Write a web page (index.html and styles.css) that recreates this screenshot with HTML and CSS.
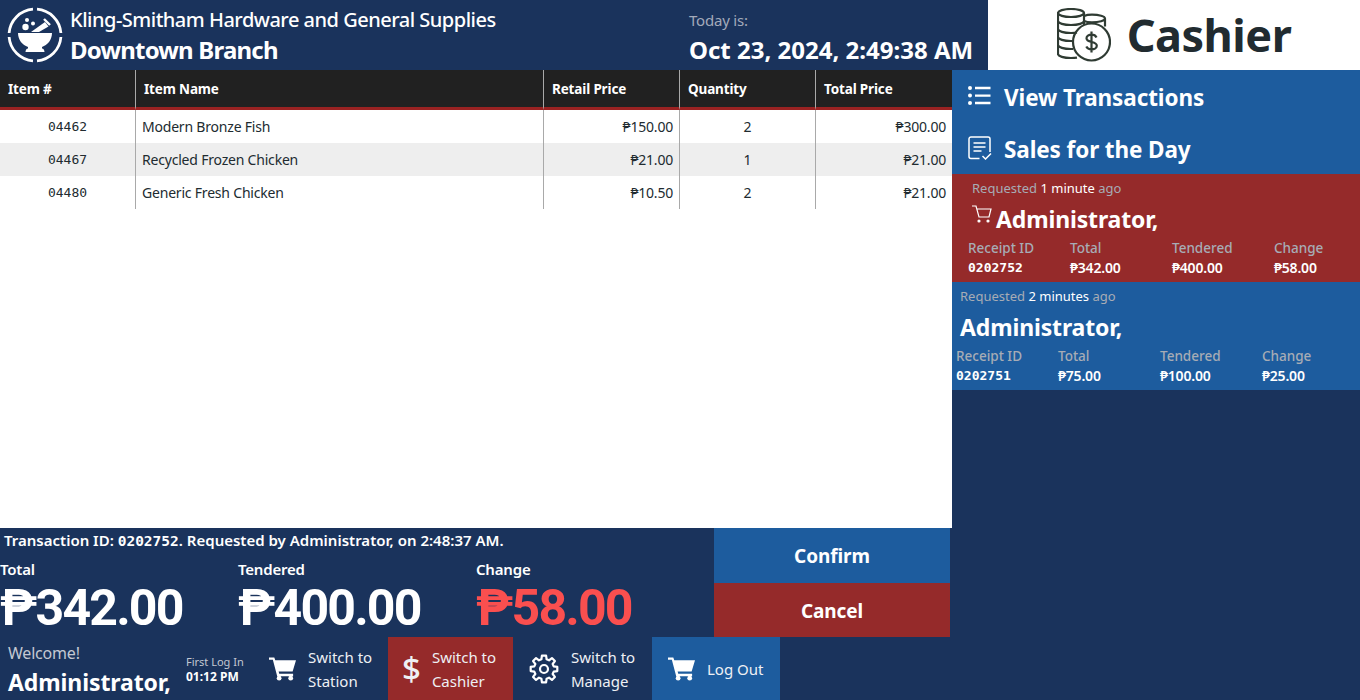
FILE: index.html
```html
<!DOCTYPE html>
<html lang="en">
<head>
    <meta charset="UTF-8">
    <title>Cashier</title>
    <link rel="stylesheet" href="styles.css">
</head>
<body>
    <header class="top">
        <div class="brand">
            <svg class="logo" viewBox="0 0 56 56" fill="none">
                <path d="M30 2.100A26 26 0 0 1 53.900 26M53.900 30A26 26 0 0 1 30 53.900M26 53.900A26 26 0 0 1 2.100 30M2.100 26A26 26 0 0 1 26 2.100" stroke="#fff" stroke-width="2.800"/>
                <path d="M11 26h34c0 7-4.500 12-10 14v1.500c1.500.2 2.500 1.500 2.500 3.500h-19c0-2 1-3.300 2.500-3.500V40c-5.500-2-10-7-10-14z" fill="#fff"/>
                <path d="M24 25l14-10 3.500 4.500L32 25z" fill="#fff"/>
                <path d="M37 12l6 6" stroke="#fff" stroke-width="2.400"/>
                <circle cx="18.500" cy="20" r="3.200" fill="#fff"/>
                <circle cx="20" cy="13" r="2" fill="#fff"/>
                <circle cx="26" cy="16.500" r="2" fill="#fff"/>
            </svg>
            <div>
                <div class="brand-name">Kling-Smitham Hardware and General Supplies</div>
                <div class="brand-branch">Downtown Branch</div>
            </div>
        </div>
        <div class="today">
            <div class="today-label">Today is:</div>
            <div class="today-value">Oct 23, 2024, 2:49:38 AM</div>
        </div>
        <div class="module">
            <svg class="module-icon" viewBox="0 0 54 54" fill="none" stroke="#2f3b33" stroke-width="2.200">
                <ellipse cx="14" cy="5" rx="13" ry="4"/>
                <path d="M1 5v41c0 2.200 5.800 4 13 4 2 0 4-.1 6-.4M27 5v12"/>
                <path d="M1 13c0 2.200 5.800 4 13 4s13-1.800 13-4M1 21c0 2.200 5.800 4 13 4 2.500 0 4-.1 6-.5M1 29c0 2.200 5.800 4 13 4h2M1 37c0 2.200 5.800 4 13 4h2"/>
                <path d="M27 8c2-.8 4-1.300 8-1.300 7 0 13 1.600 13 3.800s-6 3.800-13 3.800c-3 0-6-.4-8-1.300M48 10.500v8"/>
                <circle cx="34.500" cy="34" r="18.500"/>
                <path d="M39.500 29.500c-.8-1.800-2.800-2.800-5-2.800-2.800 0-5 1.500-5 3.600 0 5 10.300 2.500 10.300 7.400 0 2.100-2.300 3.600-5.300 3.600-2.300 0-4.300-1-5.200-2.800M34.500 23.500v21"/>
            </svg>
            <span class="module-title">Cashier</span>
        </div>
    </header>

    <div class="content">
        <main class="main">
            <div class="table-area">
                <table class="items">
                    <thead>
                        <tr>
                            <th class="col-id">Item #</th>
                            <th class="col-name">Item Name</th>
                            <th class="col-price">Retail Price</th>
                            <th class="col-qty">Quantity</th>
                            <th class="col-total">Total Price</th>
                        </tr>
                    </thead>
                    <tbody>
                        <tr>
                            <td class="mono">04462</td>
                            <td>Modern Bronze Fish</td>
                            <td class="num">₱150.00</td>
                            <td class="qty">2</td>
                            <td class="num">₱300.00</td>
                        </tr>
                        <tr>
                            <td class="mono">04467</td>
                            <td>Recycled Frozen Chicken</td>
                            <td class="num">₱21.00</td>
                            <td class="qty">1</td>
                            <td class="num">₱21.00</td>
                        </tr>
                        <tr>
                            <td class="mono">04480</td>
                            <td>Generic Fresh Chicken</td>
                            <td class="num">₱10.50</td>
                            <td class="qty">2</td>
                            <td class="num">₱21.00</td>
                        </tr>
                    </tbody>
                </table>
            </div>

            <section class="summary">
                <div class="summary-info">
                    <p class="trans-line">Transaction ID: <span class="trans-id">0202752</span>. Requested by Administrator, on 2:48:37 AM.</p>
                    <div class="amounts">
                        <div class="amount">
                            <div class="amount-label">Total</div>
                            <div class="amount-value">₱342.00</div>
                        </div>
                        <div class="amount">
                            <div class="amount-label">Tendered</div>
                            <div class="amount-value">₱400.00</div>
                        </div>
                        <div class="amount">
                            <div class="amount-label">Change</div>
                            <div class="amount-value change">₱58.00</div>
                        </div>
                    </div>
                </div>
                <div class="actions">
                    <button class="action confirm">Confirm</button>
                    <button class="action cancel">Cancel</button>
                </div>
            </section>

            <nav class="bottom">
                <div class="welcome">
                    <div class="welcome-label">Welcome!</div>
                    <div class="welcome-name">Administrator,</div>
                </div>
                <div class="login">
                    <div class="login-label">First Log In</div>
                    <div class="login-time">01:12 PM</div>
                </div>
                <a class="nav-btn station">
                    <svg class="nav-icon" viewBox="0 0 28 24" fill="#fff"><path d="M0 0h5.500l1 3H28l-3.500 11.500H10l.6 2.500H25v2.500H8.500L4 2.500H0z"/><circle cx="10.500" cy="21.500" r="2.500"/><circle cx="22.500" cy="21.500" r="2.500"/></svg>
                    <span class="nav-text">Switch to<br>Station</span>
                </a>
                <a class="nav-btn cashier">
                    <span class="dollar">$</span>
                    <span class="nav-text">Switch to<br>Cashier</span>
                </a>
                <a class="nav-btn manage">
                    <svg class="gear" viewBox="0 0 30 30" fill="none" stroke="#fff" stroke-width="2.200" stroke-linejoin="round"><circle cx="15" cy="15" r="4"/><path d="M12.400 5.300L12.900 1.700H17.100L17.600 5.300L20 6.340L22.940 4.080L25.920 7.060L23.660 10L24.700 12.400L28.300 12.900V17.100L24.700 17.600L23.660 20L25.920 22.940L22.940 25.920L20 23.660L17.600 24.700L17.100 28.300H12.900L12.400 24.700L10 23.660L7.060 25.920L4.080 22.940L6.340 20L5.300 17.600L1.700 17.100V12.900L5.300 12.400L6.340 10L4.080 7.060L7.060 4.080L10 6.340Z"/></svg>
                    <span class="nav-text">Switch to<br>Manage</span>
                </a>
                <a class="nav-btn logout">
                    <svg class="nav-icon" viewBox="0 0 28 24" fill="#fff"><path d="M0 0h5.500l1 3H28l-3.500 11.500H10l.6 2.500H25v2.500H8.500L4 2.500H0z"/><circle cx="10.500" cy="21.500" r="2.500"/><circle cx="22.500" cy="21.500" r="2.500"/></svg>
                    <span class="nav-text">Log Out</span>
                </a>
            </nav>
        </main>

        <aside class="side">
            <a class="side-link">
                <svg class="side-icon" viewBox="0 0 24 24" fill="none" stroke="#fff" stroke-width="2.400"><path d="M7.500 4H23M7.500 11.600H23M7.500 19H23"/><circle cx="2.500" cy="4" r="2" fill="#fff" stroke="none"/><circle cx="2.500" cy="11.600" r="2" fill="#fff" stroke="none"/><circle cx="2.500" cy="19" r="2" fill="#fff" stroke="none"/></svg>
                View Transactions
            </a>
            <a class="side-link">
                <svg class="side-icon" viewBox="0 0 24 24" fill="none" stroke="#fff" stroke-width="1.500"><path d="M12 22.500H3.500a2 2 0 0 1-2-2V3a2 2 0 0 1 2-2h17a2 2 0 0 1 2 2v13"/><path d="M6 7h12M6 11h12M6 15h8M15 20l3 3 5.500-5.500"/></svg>
                Sales for the Day
            </a>
            <article class="ticket active">
                <div class="ticket-when">Requested <span>1 minute</span> ago</div>
                <div class="ticket-who">
                    <svg class="ticket-cart" viewBox="0 0 20 20" fill="none" stroke="#fff" stroke-width="1.200"><path d="M0 1h4l3 11h10l2-8H5"/><circle cx="7" cy="16" r="1" fill="#fff"/><circle cx="16" cy="16" r="1" fill="#fff"/></svg>
                    Administrator,
                </div>
                <div class="ticket-grid">
                    <div class="ticket-head">Receipt ID</div>
                    <div class="ticket-head">Total</div>
                    <div class="ticket-head">Tendered</div>
                    <div class="ticket-head">Change</div>
                    <div class="ticket-id">0202752</div>
                    <div class="ticket-val">₱342.00</div>
                    <div class="ticket-val">₱400.00</div>
                    <div class="ticket-val">₱58.00</div>
                </div>
            </article>
            <article class="ticket">
                <div class="ticket-when">Requested <span>2 minutes</span> ago</div>
                <div class="ticket-who">Administrator,</div>
                <div class="ticket-grid">
                    <div class="ticket-head">Receipt ID</div>
                    <div class="ticket-head">Total</div>
                    <div class="ticket-head">Tendered</div>
                    <div class="ticket-head">Change</div>
                    <div class="ticket-id">0202751</div>
                    <div class="ticket-val">₱75.00</div>
                    <div class="ticket-val">₱100.00</div>
                    <div class="ticket-val">₱25.00</div>
                </div>
            </article>
        </aside>
    </div>
</body>
</html>
```

FILE: styles.css
```css
* {
    box-sizing: border-box;
}

body {
    margin: 0;
    height: 700px;
    overflow: hidden;
    font-family: "Noto Sans", "Open Sans", sans-serif;
    background-color: #1a335c;
    color: #fff;
}

.top {
    display: flex;
    height: 70px;
    background-color: #1a335c;
}

.brand {
    display: flex;
    align-items: center;
    width: 689px;
    padding-left: 7px;
}

.logo {
    width: 56px;
    height: 56px;
    margin-right: 7px;
}

.brand-name {
    font-size: 20px;
    font-weight: 500;
    line-height: 27px;
    letter-spacing: -0.5px;
    margin-top: 1px;
    white-space: nowrap;
}

.brand-branch {
    font-size: 24px;
    font-weight: 700;
    line-height: 31px;
    letter-spacing: -0.8px;
    margin-top: 1px;
}

.today {
    width: 299px;
    padding-top: 10px;
}

.today-label {
    font-size: 15px;
    line-height: 20px;
    color: #a3aaba;
    letter-spacing: -0.2px;
}

.today-value {
    font-size: 24px;
    font-weight: 700;
    line-height: 40px;
    white-space: nowrap;
}

.module {
    flex: 1;
    display: flex;
    align-items: center;
    justify-content: center;
    background-color: #fff;
    gap: 16px;
}

.module-icon {
    width: 54px;
    height: 54px;
}

.module-title {
    font-size: 45px;
    font-weight: 700;
    color: #212b30;
    letter-spacing: -0.5px;
    margin-top: -2px;
}

.content {
    display: flex;
    height: 630px;
}

.main {
    width: 952px;
    display: flex;
    flex-direction: column;
}

.table-area {
    height: 458px;
    background-color: #fff;
}

.items {
    width: 100%;
    border-collapse: separate;
    border-spacing: 0;
    table-layout: fixed;
    color: #212b30;
}

.items th {
    height: 40px;
    background-color: #212121;
    color: #fff;
    font-size: 13.500px;
    font-weight: 700;
    text-align: left;
    padding: 0 8px;
    border-left: 1px solid #a9a9a9;
    border-bottom: 3px solid #9a2222;
    letter-spacing: -0.15px;
}

.items th:first-child,
.items td:first-child {
    border-left: none;
}

.col-id {
    width: 135px;
}

.col-name {
    width: 408px;
}

.col-price,
.col-qty {
    width: 136px;
}

.items td {
    height: 33px;
    font-size: 14px;
    padding: 0 6px 1px;
    border-left: 1px solid #a9a9a9;
    letter-spacing: -0.2px;
}

.items tbody tr:nth-child(even) {
    background-color: #eee;
}

.items td.mono {
    font-family: "DejaVu Sans Mono", monospace;
    font-size: 13px;
    text-align: center;
    letter-spacing: 0;
}

.items td.num {
    text-align: right;
}

.items td.qty {
    text-align: center;
}

.summary {
    display: flex;
    height: 109px;
}

.summary-info {
    width: 714px;
}

.trans-line {
    margin: 0;
    padding: 2px 0 0 4px;
    font-size: 15px;
    font-weight: 600;
    line-height: 20px;
}

.trans-id {
    font-family: "DejaVu Sans Mono", monospace;
    font-size: 14.500px;
    font-weight: 700;
}

.amounts {
    display: flex;
    margin-top: 8px;
}

.amount {
    width: 238px;
}

.amount-label {
    font-size: 15px;
    font-weight: 600;
    line-height: 20px;
    letter-spacing: -0.2px;
}

.amount-value {
    font-family: Roboto, "Noto Sans", sans-serif;
    font-size: 50px;
    font-weight: 700;
    line-height: 58px;
    letter-spacing: -1.8px;
}

.amount-value.change {
    color: #fa4f4f;
}

.actions {
    width: 236px;
    display: flex;
    flex-direction: column;
}

.action {
    border: none;
    color: #fff;
    font-family: inherit;
    font-size: 19px;
    font-weight: 700;
    letter-spacing: -0.1px;
    padding-top: 2px;
}

.confirm {
    height: 55px;
    background-color: #1d5c9e;
}

.cancel {
    height: 54px;
    background-color: #952a2a;
}

.bottom {
    display: flex;
    height: 63px;
}

.welcome {
    width: 178px;
    padding: 6px 0 0 8px;
}

.welcome-label {
    font-size: 16px;
    line-height: 21px;
    color: #c3c8d2;
    letter-spacing: -0.2px;
}

.welcome-name {
    font-size: 23px;
    font-weight: 700;
    line-height: 36px;
    letter-spacing: -0.1px;
    white-space: nowrap;
}

.login {
    width: 91px;
    padding: 17px 0 0 8px;
}

.login-label {
    font-size: 11px;
    line-height: 15px;
    color: #c3c8d2;
    white-space: nowrap;
}

.login-time {
    font-size: 12px;
    font-weight: 700;
    line-height: 16px;
}

.nav-btn {
    display: flex;
    align-items: center;
    gap: 12px;
    font-size: 15px;
    line-height: 24px;
    color: #eef0f4;
}

.station {
    width: 119px;
}

.cashier {
    width: 125px;
    padding-left: 14px;
    gap: 11px;
    background-color: #952a2a;
}

.manage {
    width: 139px;
    padding-left: 16px;
    gap: 12px;
}

.logout {
    width: 128px;
    padding-left: 16px;
    gap: 12px;
    background-color: #1d5c9e;
}

.nav-icon {
    width: 27px;
    height: 24px;
}

.dollar {
    font-size: 33px;
    font-weight: 500;
    line-height: 33px;
}

.gear {
    width: 30px;
    height: 30px;
}

.side {
    width: 408px;
    background-color: #1a335c;
}

.side-link {
    display: flex;
    align-items: center;
    height: 52px;
    padding: 2px 0 0 15px;
    gap: 12px;
    background-color: #1d5c9e;
    font-size: 22.500px;
    font-weight: 700;
    letter-spacing: -0.1px;
}

.side-icon {
    width: 25px;
    height: 24px;
    margin-top: -2px;
}

.ticket {
    height: 108px;
    padding: 5px 0 0 4px;
    background-color: #1d5c9e;
}

.ticket.active {
    background-color: #952a2a;
    padding-left: 16px;
}

.ticket-when {
    font-size: 13px;
    line-height: 18px;
    color: #a7acb5;
    padding-left: 4px;
}

.ticket-when span {
    color: #fff;
}

.ticket-who {
    display: flex;
    align-items: flex-end;
    gap: 4px;
    height: 38px;
    padding-left: 4px;
    font-size: 23px;
    font-weight: 700;
    line-height: 32px;
    letter-spacing: -0.15px;
}

.ticket-cart {
    width: 20px;
    height: 20px;
    margin-bottom: 10px;
}

.ticket-grid {
    display: grid;
    grid-template-columns: repeat(4, 102px);
    margin-top: 3px;
}

.ticket-head {
    font-size: 13.500px;
    font-weight: 500;
    line-height: 20px;
    color: #a7acb5;
}

.ticket-id {
    font-family: "DejaVu Sans Mono", monospace;
    font-size: 13px;
    font-weight: 700;
    line-height: 20px;
}

.ticket-val {
    font-size: 14px;
    font-weight: 600;
    line-height: 20px;
    letter-spacing: -0.2px;
}
```
